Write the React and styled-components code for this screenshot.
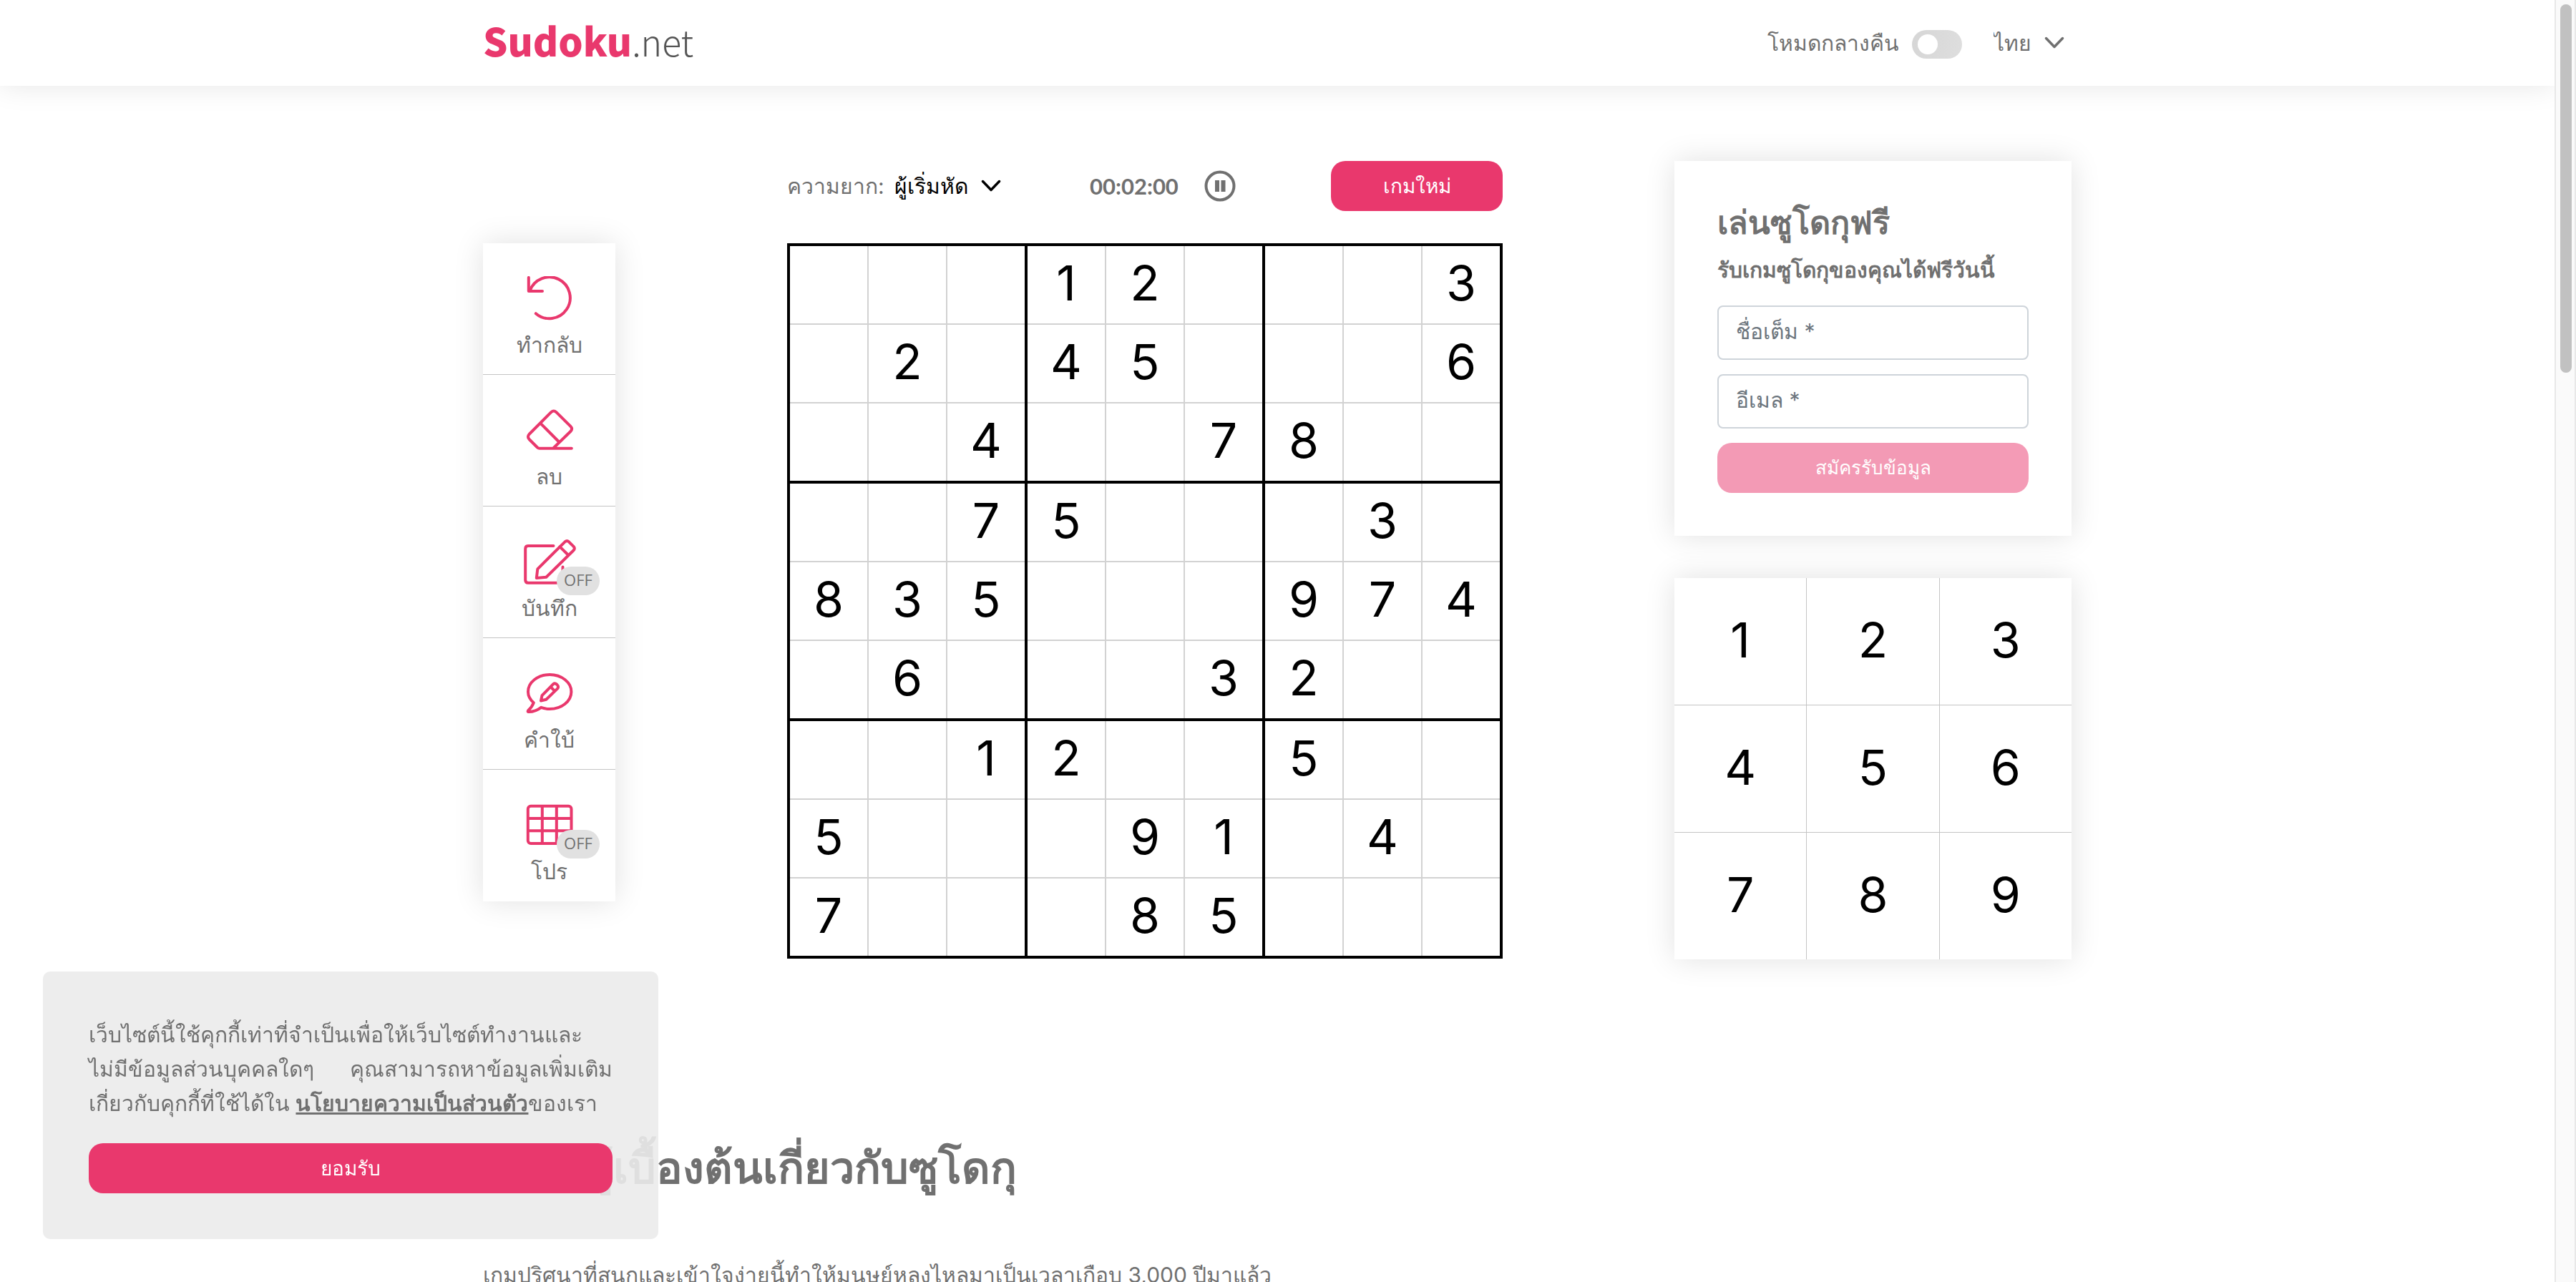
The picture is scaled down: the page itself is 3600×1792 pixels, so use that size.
import React from "react";
import styled, { createGlobalStyle } from "styled-components";

const pink = "#e9386d";
const gray = "#707070";
const hairline = "#c4c4c4";
const shadow = "0 0 40px rgba(0, 0, 0, 0.12)";

const GlobalStyle = createGlobalStyle`
  *, *::before, *::after { box-sizing: border-box; }
  body {
    margin: 0;
    background: #fff;
    color: ${gray};
    font-family: Inter, "Noto Sans", sans-serif;
    font-size: 30px;
    line-height: 48px;
  }
  h1, h2, p { margin: 0; }
  button, input, select { font: inherit; color: inherit; margin: 0; }
  button { border: 0; padding: 0; background: none; cursor: pointer; }
`;

const Shell = styled.div`
  display: flex;
  height: 100vh;
  overflow: hidden;
`;

const Page = styled.div`
  flex: 1;
  min-width: 0;
  overflow: hidden;
`;

const Container = styled.div`
  width: calc(100% - 80px);
  max-width: 2220px;
  margin: 0 auto;
`;

const Header = styled.header`
  background: #fff;
  box-shadow: 0 0 40px rgba(0, 0, 0, 0.1);
`;

const HeaderRow = styled(Container)`
  display: flex;
  align-items: center;
  justify-content: space-between;
  height: 120px;
`;

const Logo = styled.a`
  padding-bottom: 8px;
  font-family: "Noto Sans CJK SC", sans-serif;
  font-size: 54px;
  font-weight: 900;
  line-height: 72px;
  color: ${pink};
  text-decoration: none;
`;

const LogoSuffix = styled.span`
  font-size: 50px;
  font-weight: 300;
  color: #555;
`;

const HeaderTools = styled.div`
  display: flex;
  align-items: center;
  gap: 44px;
  padding-right: 10px;
`;

const NightMode = styled.label`
  display: flex;
  align-items: center;
  gap: 18px;
  cursor: pointer;
`;

const Switch = styled.input`
  appearance: none;
  display: flex;
  align-items: center;
  width: 70px;
  height: 40px;
  margin: 4px 0 0;
  padding: 0 8px;
  border-radius: 20px;
  background: linear-gradient(100deg, #d6d6d6, #dedede);
  &::before {
    content: "";
    width: 28px;
    height: 28px;
    border-radius: 50%;
    background: #fff;
  }
  &:checked { justify-content: flex-end; background: ${pink}; }
`;

const Picker = styled.span`
  display: flex;
  align-items: center;
  gap: 18px;
  color: ${(p) => p.$color || gray};
`;

const Select = styled.select`
  appearance: none;
  field-sizing: content;
  height: 60px;
  padding: 0;
  border: 0;
  background: transparent;
  cursor: pointer;
`;

const Game = styled(Container)`
  display: grid;
  grid-template-columns: 185px 1000px 555px;
  justify-content: space-between;
  align-items: start;
  padding-top: 105px;
`;

const Toolbar = styled.nav`
  display: flex;
  flex-direction: column;
  margin-top: 115px;
  background: #fff;
  box-shadow: ${shadow};
`;

const Tool = styled.button`
  position: relative;
  display: flex;
  flex-direction: column;
  align-items: center;
  gap: 8px;
  height: 184px;
  padding-top: 46px;
  border-bottom: 1px solid ${hairline};
  &:last-child { border-bottom: 0; }
`;

const ToolIcon = styled.svg`
  width: 80px;
  height: 64px;
  flex: none;
  fill: none;
  stroke: ${pink};
  stroke-width: 4;
  stroke-linecap: round;
  stroke-linejoin: round;
`;

const Badge = styled.span`
  position: absolute;
  top: 84px;
  right: 22px;
  width: 60px;
  height: 40px;
  border-radius: 20px;
  background: #e1e1e1;
  font-family: "Open Sans", sans-serif;
  font-size: 22px;
  line-height: 36px;
  text-align: center;
`;

const GameBar = styled.div`
  display: grid;
  grid-template-columns: 423px 1fr 240px;
  align-items: center;
  height: 70px;
  margin-bottom: 45px;
`;

const Difficulty = styled.label`
  display: flex;
  align-items: center;
  gap: 14px;
`;

const Timer = styled.div`
  display: flex;
  align-items: center;
  gap: 36px;
  font-family: Lato, sans-serif;
  font-weight: 700;
  font-size: 31px;
`;

const PauseButton = styled.button`
  display: flex;
`;

const Button = styled.button`
  height: 70px;
  width: 100%;
  border-radius: 20px;
  background: ${pink};
  color: #fff;
  font-size: ${(p) => (p.$compact ? 26 : 28)}px;
  font-weight: 500;
  opacity: ${(p) => (p.disabled ? 0.5 : 1)};
`;

const Board = styled.div`
  display: grid;
  grid-template-columns: repeat(3, 1fr);
  gap: 4px;
  border: 4px solid #000;
  background: #000;
`;

const Box = styled.div`
  display: grid;
  grid-template-columns: repeat(3, 1fr);
  gap: 2px;
  background: #d2d2d2;
`;

const Digit = styled.button`
  display: flex;
  align-items: center;
  justify-content: center;
  height: ${(p) => p.$height}px;
  padding-bottom: 6px;
  background: #fff;
  color: #000;
  font-size: 68px;
  line-height: 84px;
`;

const Side = styled.aside`
  display: flex;
  flex-direction: column;
  gap: 59px;
`;

const Signup = styled.form`
  display: flex;
  flex-direction: column;
  gap: 20px;
  padding: 50px 60px 60px;
  background: #fff;
  box-shadow: ${shadow};
`;

const SignupHead = styled.div`
  display: flex;
  flex-direction: column;
  gap: 6px;
  margin-bottom: 6px;
`;

const SignupTitle = styled.h2`
  font-size: 45px;
  font-weight: 700;
  line-height: 72px;
`;

const SignupLead = styled.p`
  font-weight: 700;
`;

const Field = styled.input`
  width: 100%;
  height: 76px;
  padding: 0 24px 4px;
  border: 2px solid #ced4da;
  border-radius: 8px;
  background: #fff;
  &::placeholder { color: #6c757d; opacity: 1; }
`;

const Numpad = styled.div`
  display: grid;
  grid-template-columns: repeat(3, 1fr);
  gap: 1px;
  background: ${hairline};
  box-shadow: ${shadow};
`;

const Article = styled(Container)`
  display: flex;
  flex-direction: column;
  gap: 78px;
  padding-top: 243px;
`;

const ArticleTitle = styled.h1`
  font-size: 61px;
  font-weight: 700;
  line-height: 96px;
`;

const Cookie = styled.section`
  position: fixed;
  left: 60px;
  bottom: 60px;
  display: flex;
  flex-direction: column;
  gap: 32px;
  width: 860px;
  padding: 64px;
  border-radius: 10px;
  background: rgba(235, 235, 235, 0.9);
`;

const CookieText = styled.p`
  text-align: justify;
`;

const PolicyLink = styled.a`
  color: inherit;
  font-weight: 700;
  text-decoration: underline;
`;

const ScrollRail = styled.div`
  width: 30px;
  padding: 6px 4px 0 6px;
  border: solid #e8e8e8;
  border-width: 0 2px;
  background: #fafafa;
`;

const ScrollThumb = styled.div`
  width: 16px;
  height: 515px;
  border-radius: 8px;
  background: #c1c1c1;
`;

const Chevron = () => (
  <svg width="28" height="18" viewBox="0 0 28 18" fill="none" stroke="currentColor" strokeWidth="3.5" strokeLinecap="round" strokeLinejoin="round" aria-hidden="true">
    <path d="M2.5 2.5 14 14.500 25.500 2.500" />
  </svg>
);

const tools = [
  {
    label: "ทำกลับ",
    icon: (
      <>
        <path d="M10.800 1.900V21H30" />
        <path d="M12.500 20.500A29 29 0 1 1 20.800 52.200" />
      </>
    ),
  },
  {
    label: "ลบ",
    icon: (
      <>
        <path d="M45 56.700 69.600 32.700Q72.600 29.300 69.600 26.200L49.400 6.200Q45.800 2.800 42.200 6.200L11.500 37Q8.500 40.500 11.500 44L23 55.500Q24.300 56.700 26 56.700H70.800" />
        <path d="M27.500 21.800 53 47.500" />
      </>
    ),
  },
  {
    label: "บันทึก",
    badge: true,
    icon: (
      <>
        <path d="M45.500 9H10.200Q6.200 9 6.200 13V56.700Q6.200 60.700 10.200 60.700H54.500Q58.500 60.700 58.500 56.700V38.500" />
        <path d="M21.800 54 23.300 41.300 61.500 3.300Q64.300 1 67 3.300L73.600 9.900Q76 12.500 73.600 15.300L35.300 52.700Z" />
        <path d="M54.500 10.300 66.300 22" />
      </>
    ),
  },
  {
    label: "คำใบ้",
    icon: (
      <>
        <path d="M28.200 50.800Q34 53 40.200 53A30.200 24 0 1 0 10 29Q10 37.500 17.800 44.300Q15.500 50.500 10 55.300Q9 57.300 11 57Q20.500 56.800 28.200 50.800Z" />
        <path d="M28 41.500 29.500 34.200 45 18.300Q47.400 16.400 49.800 18.400L51.300 20Q53 22.300 51 24.600L35.300 39.800Z" />
        <path d="M42.300 23 47 27.700" />
      </>
    ),
  },
  {
    label: "โปร",
    badge: true,
    icon: (
      <>
        <rect x="9.800" y="4.700" width="60.700" height="52.300" rx="4" />
        <path d="M29.800 5V57M49.800 5V57M10 22H70M10 39.300H70" />
      </>
    ),
  },
];

const rows = [
  "   12   3",
  " 2 45   6",
  "  4  78  ",
  "  75   3 ",
  "835   974",
  " 6   32  ",
  "  12  5  ",
  "5   91 4 ",
  "7   85   ",
];

const boxes = Array.from({ length: 9 }, (_, b) =>
  Array.from({ length: 9 }, (_, c) => {
    const row = Math.floor(b / 3) * 3 + Math.floor(c / 3);
    const col = (b % 3) * 3 + (c % 3);
    return { row, col, value: rows[row][col].trim() };
  })
);

export default function App() {
  return (
    <>
      <GlobalStyle />
      <Shell>
        <Page>
          <Header>
            <HeaderRow>
              <Logo href="#">
                Sudoku<LogoSuffix>.net</LogoSuffix>
              </Logo>
              <HeaderTools>
                <NightMode>
                  โหมดกลางคืน
                  <Switch type="checkbox" />
                </NightMode>
                <Picker>
                  <Select aria-label="ภาษา">
                    <option>ไทย</option>
                  </Select>
                  <Chevron />
                </Picker>
              </HeaderTools>
            </HeaderRow>
          </Header>

          <main>
            <Game>
              <Toolbar>
                {tools.map((tool) => (
                  <Tool key={tool.label} type="button">
                    <ToolIcon viewBox="0 0 80 64" aria-hidden="true">{tool.icon}</ToolIcon>
                    {tool.badge && <Badge>OFF</Badge>}
                    <span>{tool.label}</span>
                  </Tool>
                ))}
              </Toolbar>

              <section>
                <GameBar>
                  <Difficulty>
                    ความยาก:
                    <Picker $color="#000">
                      <Select>
                        <option>ผู้เริ่มหัด</option>
                      </Select>
                      <Chevron />
                    </Picker>
                  </Difficulty>
                  <Timer>
                    00:02:00
                    <PauseButton type="button" aria-label="หยุดชั่วคราว">
                      <svg width="44" height="44" viewBox="0 0 44 44" fill="none" stroke="currentColor" aria-hidden="true">
                        <circle cx="22" cy="22" r="19.500" strokeWidth="4" />
                        <path d="M18 14V30M26.500 14V30" strokeWidth="6" />
                      </svg>
                    </PauseButton>
                  </Timer>
                  <Button type="button">เกมใหม่</Button>
                </GameBar>
                <Board>
                  {boxes.map((cells, b) => (
                    <Box key={b}>
                      {cells.map(({ row, col, value }) => (
                        <Digit key={col + row * 9} type="button" $height={108} aria-label={`${row + 1}-${col + 1}`}>
                          {value}
                        </Digit>
                      ))}
                    </Box>
                  ))}
                </Board>
              </section>

              <Side>
                <Signup>
                  <SignupHead>
                    <SignupTitle>เล่นซูโดกุฟรี</SignupTitle>
                    <SignupLead>รับเกมซูโดกุของคุณได้ฟรีวันนี้</SignupLead>
                  </SignupHead>
                  <Field type="text" placeholder="ชื่อเต็ม *" aria-label="ชื่อเต็ม" />
                  <Field type="email" placeholder="อีเมล *" aria-label="อีเมล" />
                  <Button type="submit" $compact disabled>สมัครรับข้อมูล</Button>
                </Signup>
                <Numpad>
                  {[1, 2, 3, 4, 5, 6, 7, 8, 9].map((n) => (
                    <Digit key={n} type="button" $height={177}>{n}</Digit>
                  ))}
                </Numpad>
              </Side>
            </Game>

            <Article as="article">
              <ArticleTitle>ความรู้เบื้องต้นเกี่ยวกับซูโดกุ</ArticleTitle>
              <p>เกมปริศนาที่สนุกและเข้าใจง่ายนี้ทำให้มนุษย์หลงไหลมาเป็นเวลาเกือบ 3,000 ปีมาแล้ว</p>
            </Article>
          </main>
        </Page>
        <ScrollRail>
          <ScrollThumb />
        </ScrollRail>
      </Shell>

      <Cookie>
        <CookieText>
          เว็บไซต์นี้ใช้คุกกี้เท่าที่จำเป็นเพื่อให้เว็บไซต์ทำงานและไม่มีข้อมูลส่วนบุคคลใดๆ คุณสามารถหาข้อมูลเพิ่มเติมเกี่ยวกับคุกกี้ที่ใช้ได้ใน{" "}
          <PolicyLink href="#">นโยบายความเป็นส่วนตัว</PolicyLink>ของเรา
        </CookieText>
        <Button type="button">ยอมรับ</Button>
      </Cookie>
    </>
  );
}
